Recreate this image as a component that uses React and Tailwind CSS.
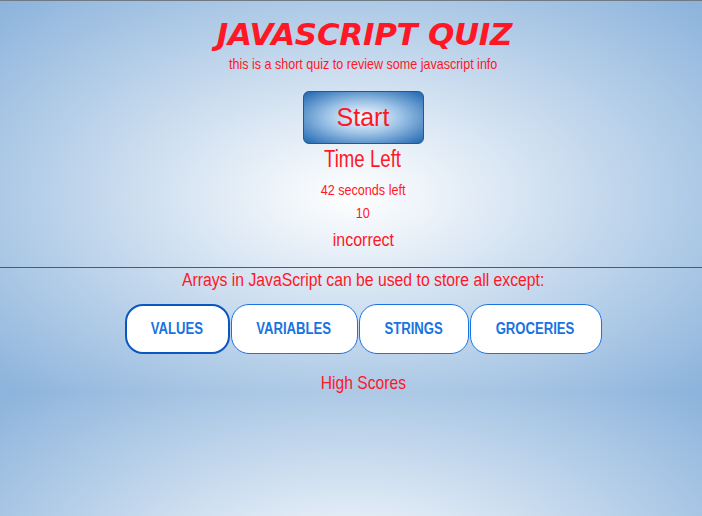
const answers = [
    { label: "values", width: "w-[105px]" },
    { label: "variables", width: "w-[127px]" },
    { label: "strings", width: "w-[110px]" },
    { label: "groceries", width: "w-[132px]" },
];

export default function App() {
    return (
        <div className="min-h-screen w-full font-['Liberation_Sans',Arial,sans-serif] bg-[radial-gradient(ellipse_at_center,#ffffff_0%,#8db4dc_98%)] bg-size-[100%_392px] bg-repeat text-[#ff1726]">
            <div className="h-px bg-[#707a84]" />
            <header className="flex flex-col items-center pl-[27px] h-[266px]">
                <h1 className="mt-[14px] font-['DejaVu_Sans',Verdana,sans-serif] font-bold italic text-[31px] leading-[38px] tracking-[-0.3px]">
                    JAVASCRIPT QUIZ
                </h1>
                <p className="-ml-[3px] mt-[3px] text-[14.5px] leading-[16px] scale-x-[0.865]">
                    this is a short quiz to review some javascript info
                </p>
                <button className="-ml-[3px] mt-[19px] w-[121px] h-[53px] rounded-[6px] border border-[#1d5a9a] bg-[radial-gradient(ellipse_at_center,#ffffff_0%,#9cc2e6_45%,#1f66b0_100%)] text-[25px] leading-none text-[#ff1726]">
                    Start
                </button>
                <h2 className="-ml-[3px] mt-[3px] text-[23px] leading-[24px] scale-x-[0.81]">Time Left</h2>
                <p className="-ml-[3px] mt-[9px] text-[14px] leading-[20px] scale-x-[0.9]">42 seconds left</p>
                <p className="-ml-[3px] mt-[3px] text-[14px] leading-[20px] scale-x-[0.9]">10</p>
                <p className="-ml-[3px] mt-[7px] text-[19px] leading-[20px] scale-x-[0.84]">incorrect</p>
            </header>
            <div className="h-px bg-[#1366d0]" />
            <main className="flex flex-col items-center pl-[24px]">
                <p className="text-[18px] leading-[24px] whitespace-nowrap scale-x-[0.875]">
                    Arrays in JavaScript can be used to store all except:
                </p>
                <div className="mt-[12px] flex gap-px">
                    {answers.map((answer, i) => (
                        <button
                            key={answer.label}
                            className={
                                answer.width +
                                (i === 0
                                    ? " h-[50px] rounded-[18px] bg-white border-2 border-[#0b57c2] flex items-center justify-center"
                                    : " h-[50px] rounded-[18px] bg-white border border-[#1a73e0] flex items-center justify-center")
                            }>
                            <span className="inline-block text-[16px] font-bold uppercase text-[#1a73e0] scale-x-[0.82]">
                                {answer.label}
                            </span>
                        </button>
                    ))}
                </div>
                <h3 className="mt-[18px] text-[18.5px] leading-[22px] scale-x-[0.845]">High Scores</h3>
            </main>
        </div>
    );
}
